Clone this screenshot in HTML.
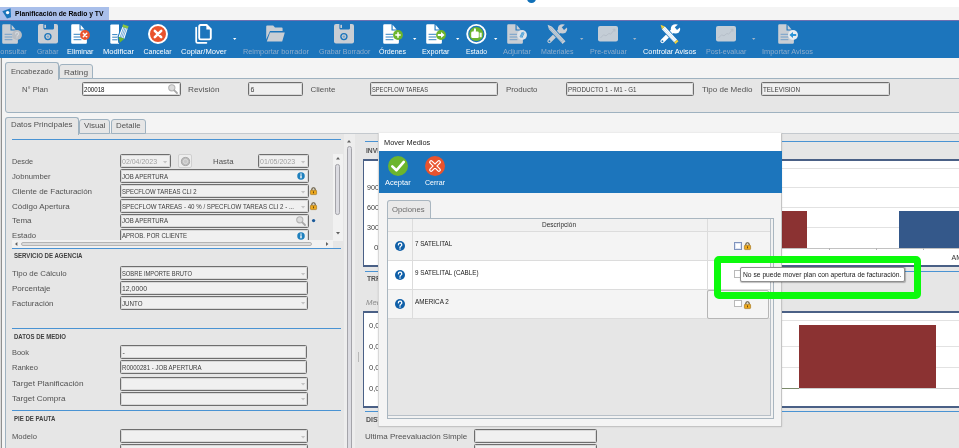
<!DOCTYPE html>
<html><head><meta charset="utf-8"><title>Planificaci&oacute;n de Radio y TV</title>
<style>
html,body{margin:0;padding:0;}
body{width:959px;height:448px;overflow:hidden;background:#fff;font-family:"Liberation Sans", sans-serif;position:relative;}
.a{position:absolute;box-sizing:border-box;}
.t{position:absolute;white-space:nowrap;transform-origin:0 50%;line-height:1;}
svg{position:absolute;overflow:visible;}
#w{position:absolute;left:0;top:0;width:959px;height:448px;overflow:hidden;will-change:transform;}
</style></head><body><div id="w">
<div class="a" style="left:0px;top:7px;width:959px;height:13px;background:#f4f4f4;"></div>
<div class="a" style="left:0px;top:7px;width:108.5px;height:13px;background:#a9bfea;"></div>
<svg style="left:2px;top:8px" width="10" height="11" viewBox="0 0 10 11"><path d="M0.3 3.2 L8.6 0.2 L9 9.2 L5 10.5 Z" fill="#1a74bb"/><circle cx="5.6" cy="4.6" r="1.7" fill="#fff"/></svg>
<span class="t" style="left:14.5px;top:10px;font-size:8px;color:#000;font-weight:bold;transform:scaleX(0.847);">Planificaci&oacute;n de Radio y TV</span>
<div class="a" style="left:527px;top:-6px;width:9px;height:9px;background:#1070b8;border-radius:50%;"></div>
<div class="a" style="left:0px;top:20px;width:959px;height:38px;background:#1c75bc;"></div>
<div class="a" style="left:0px;top:20px;width:959px;height:0.6px;background:#6f6fb0;"></div>
<div class="a" style="left:0px;top:58px;width:959px;height:390px;background:#f4f4f4;"></div>
<div class="a" style="left:0px;top:58px;width:1.4px;height:390px;background:#dcdcdc;"></div>
<div class="a" style="left:1.3px;top:58px;width:0.9px;height:390px;background:#909090;"></div>
<div class="a" style="left:5px;top:78px;width:960px;height:35px;background:#e6e6e6;border:1px solid #9fb2c0;border-radius:0 0 0 3px;"></div>
<div class="a" style="left:59px;top:64px;width:34px;height:15px;background:#e6e6e6;border:1px solid #9fb2c0;border-radius:3px 3px 0 0;"></div>
<div class="a" style="left:5px;top:62px;width:54px;height:18px;background:#e6e6e6;border:1px solid #9fb2c0;border-radius:3px 3px 0 0;border-bottom:none;"></div>
<span class="t" style="left:11px;top:68px;font-size:8px;color:#525252;transform:scaleX(0.944);">Encabezado</span>
<span class="t" style="left:64px;top:69px;font-size:8px;color:#525252;transform:scaleX(1.038);">Rating</span>
<span class="t" style="left:22px;top:86px;font-size:8px;color:#525252;transform:scaleX(0.955);">N&deg; Plan</span>
<div class="a" style="left:82px;top:82px;width:99px;height:14px;background:#fff;border:1px solid #6e6e6e;border-radius:1.5px;box-shadow:inset 0 0 0 1px #d8d8d8;"></div>
<span class="t" style="left:84px;top:86px;font-size:7px;color:#101010;transform:scaleX(0.878);">200018</span>
<svg style="left:168.2px;top:84.4px" width="10" height="10" viewBox="0 0 10 10"><circle cx="3.8" cy="3.8" r="3.1" fill="#dcdcdc" stroke="#b4b4b4" stroke-width="1.1"/><path d="M6.3 6.3 L9 9" stroke="#a8a8a8" stroke-width="1.8" stroke-linecap="round"/></svg>
<span class="t" style="left:188px;top:86px;font-size:8px;color:#525252;transform:scaleX(1.026);">Revisi&oacute;n</span>
<div class="a" style="left:248px;top:82px;width:55px;height:14px;background:#f0f0f0;border:1px solid #6e6e6e;border-radius:1.5px;box-shadow:inset 0 0 0 1px #d8d8d8;"></div>
<span class="t" style="left:250.5px;top:86px;font-size:7px;color:#3c3c3c;">6</span>
<span class="t" style="left:310.5px;top:86px;font-size:8px;color:#525252;">Cliente</span>
<div class="a" style="left:370px;top:82px;width:128px;height:14px;background:#f0f0f0;border:1px solid #6e6e6e;border-radius:1.5px;box-shadow:inset 0 0 0 1px #d8d8d8;"></div>
<span class="t" style="left:372px;top:86px;font-size:7px;color:#3c3c3c;transform:scaleX(0.816);">SPECFLOW TAREAS</span>
<span class="t" style="left:506px;top:86px;font-size:8px;color:#525252;transform:scaleX(0.983);">Producto</span>
<div class="a" style="left:565.5px;top:82px;width:128.5px;height:14px;background:#f0f0f0;border:1px solid #6e6e6e;border-radius:1.5px;box-shadow:inset 0 0 0 1px #d8d8d8;"></div>
<span class="t" style="left:567.5px;top:86px;font-size:7px;color:#3c3c3c;transform:scaleX(0.886);">PRODUCTO 1 - M1 - G1</span>
<span class="t" style="left:702px;top:86px;font-size:8px;color:#525252;">Tipo de Medio</span>
<div class="a" style="left:761px;top:82px;width:129px;height:14px;background:#f0f0f0;border:1px solid #6e6e6e;border-radius:1.5px;box-shadow:inset 0 0 0 1px #d8d8d8;"></div>
<span class="t" style="left:763px;top:86px;font-size:7px;color:#3c3c3c;transform:scaleX(0.897);">TELEVISION</span>
<div class="a" style="left:5px;top:133px;width:960px;height:320px;background:#e6e6e6;border:1px solid #c4c9ce;border-radius:0 0 0 3px;border-left-color:#9fb2c0;"></div>
<div class="a" style="left:79px;top:118.5px;width:31px;height:15.5px;background:#e6e6e6;border:1px solid #9fb2c0;border-radius:3px 3px 0 0;"></div>
<div class="a" style="left:111px;top:118.5px;width:35px;height:15.5px;background:#e6e6e6;border:1px solid #9fb2c0;border-radius:3px 3px 0 0;"></div>
<div class="a" style="left:5px;top:117px;width:74px;height:18px;background:#e6e6e6;border:1px solid #9fb2c0;border-radius:3px 3px 0 0;border-bottom:none;"></div>
<span class="t" style="left:11px;top:121px;font-size:8px;color:#525252;transform:scaleX(0.988);">Datos Principales</span>
<span class="t" style="left:83.5px;top:122px;font-size:8px;color:#525252;transform:scaleX(0.993);">Visual</span>
<span class="t" style="left:115.5px;top:122px;font-size:8px;color:#525252;transform:scaleX(0.984);">Detalle</span>
<div class="a" style="left:344px;top:134px;width:10.5px;height:320px;background:#ededed;"></div>
<svg style="left:347.3px;top:140.3px" width="4" height="2.4" viewBox="0 0 4 2.4"><path d="M0 2.4 L2 0 L4 2.4 Z" fill="#606060"/></svg>
<div class="a" style="left:346.8px;top:146px;width:5.2px;height:310px;background:#dcdce2;border:1px solid #a4a4aa;border-radius:2.6px;"></div>
<div class="a" style="left:357.5px;top:352px;width:1px;height:10px;background:#b8b8b8;"></div>
<div class="a" style="left:12px;top:138.5px;width:329px;height:1px;background:#4a93d3;"></div>
<span class="t" style="left:12px;top:158px;font-size:8px;color:#525252;transform:scaleX(0.908);">Desde</span>
<div class="a" style="left:120px;top:154px;width:51px;height:14px;background:#f0f0f0;border:1px solid #6e6e6e;border-radius:1.5px;box-shadow:inset 0 0 0 1px #d8d8d8;"></div>
<span class="t" style="left:122px;top:158px;font-size:7px;color:#a0a0a0;">02/04/2023</span>
<svg style="left:162.9px;top:160.7px" width="4.2" height="2.5" viewBox="0 0 4.2 2.5"><path d="M0 0 L4.2 0 L2.1 2.5 Z" fill="#c4c4c4"/></svg>
<div class="a" style="left:178px;top:154px;width:14px;height:14px;background:#ededed;border:1px solid #d0d0d0;border-radius:2px;"></div>
<svg style="left:180.5px;top:156.5px" width="9" height="9" viewBox="0 0 9 9"><circle cx="4.5" cy="4.5" r="4.1" fill="#bcbcbc" stroke="#9c9c9c" stroke-width="0.8"/><circle cx="4.5" cy="4.5" r="2.2" fill="#c8c8c8" stroke="#dedede" stroke-width="0.8"/></svg>
<span class="t" style="left:213px;top:158px;font-size:8px;color:#525252;transform:scaleX(0.981);">Hasta</span>
<div class="a" style="left:258px;top:154px;width:50.5px;height:14px;background:#f0f0f0;border:1px solid #6e6e6e;border-radius:1.5px;box-shadow:inset 0 0 0 1px #d8d8d8;"></div>
<span class="t" style="left:260px;top:158px;font-size:7px;color:#a0a0a0;">01/05/2023</span>
<svg style="left:300.9px;top:160.7px" width="4.2" height="2.5" viewBox="0 0 4.2 2.5"><path d="M0 0 L4.2 0 L2.1 2.5 Z" fill="#c4c4c4"/></svg>
<span class="t" style="left:12px;top:173px;font-size:8px;color:#525252;transform:scaleX(0.962);">Jobnumber</span>
<div class="a" style="left:120px;top:169px;width:188.5px;height:14px;background:#f0f0f0;border:1px solid #6e6e6e;border-radius:1.5px;box-shadow:inset 0 0 0 1px #d8d8d8;"></div>
<span class="t" style="left:122px;top:173px;font-size:7px;color:#3c3c3c;transform:scaleX(0.865);">JOB APERTURA</span>
<svg style="left:296.7px;top:172.3px" width="8" height="8" viewBox="0 0 8 8"><circle cx="4" cy="4" r="3.75" fill="#1f80bd"/><rect x="3.3" y="3.3" width="1.4" height="3" fill="#fff"/><rect x="3.3" y="1.5" width="1.4" height="1.2" fill="#fff"/></svg>
<span class="t" style="left:12px;top:188px;font-size:8px;color:#525252;">Cliente de Facturaci&oacute;n</span>
<div class="a" style="left:120px;top:184px;width:188.5px;height:14px;background:#f0f0f0;border:1px solid #6e6e6e;border-radius:1.5px;box-shadow:inset 0 0 0 1px #d8d8d8;"></div>
<span class="t" style="left:122px;top:188px;font-size:7px;color:#3c3c3c;transform:scaleX(0.854);">SPECFLOW TAREAS CLI 2</span>
<svg style="left:300.9px;top:190.7px" width="4.2" height="2.5" viewBox="0 0 4.2 2.5"><path d="M0 0 L4.2 0 L2.1 2.5 Z" fill="#c4c4c4"/></svg>
<svg style="left:310.2px;top:186.2px" width="7" height="9" viewBox="0 0 7 9"><path d="M1.8 4.6 V3.4 A1.7 1.7 0 0 1 5.2 3.4 V4.6" fill="none" stroke="#5e5236" stroke-width="1.1"/><rect x="0.4" y="4.2" width="6.2" height="4.4" rx="0.8" fill="#eda81c" stroke="#9a6c14" stroke-width="0.6"/><rect x="3" y="5.4" width="1" height="1.9" fill="#6a4808"/></svg>
<span class="t" style="left:12px;top:203px;font-size:8px;color:#525252;">C&oacute;digo Apertura</span>
<div class="a" style="left:120px;top:199px;width:188.5px;height:14px;background:#f0f0f0;border:1px solid #6e6e6e;border-radius:1.5px;box-shadow:inset 0 0 0 1px #d8d8d8;"></div>
<span class="t" style="left:122px;top:203px;font-size:7px;color:#3c3c3c;transform:scaleX(0.878);">SPECFLOW TAREAS - 40 % / SPECFLOW TAREAS CLI 2 - ...</span>
<svg style="left:300.9px;top:205.7px" width="4.2" height="2.5" viewBox="0 0 4.2 2.5"><path d="M0 0 L4.2 0 L2.1 2.5 Z" fill="#c4c4c4"/></svg>
<svg style="left:310.2px;top:201.2px" width="7" height="9" viewBox="0 0 7 9"><path d="M1.8 4.6 V3.4 A1.7 1.7 0 0 1 5.2 3.4 V4.6" fill="none" stroke="#5e5236" stroke-width="1.1"/><rect x="0.4" y="4.2" width="6.2" height="4.4" rx="0.8" fill="#eda81c" stroke="#9a6c14" stroke-width="0.6"/><rect x="3" y="5.4" width="1" height="1.9" fill="#6a4808"/></svg>
<span class="t" style="left:12px;top:217px;font-size:8px;color:#525252;">Tema</span>
<div class="a" style="left:120px;top:214px;width:188.5px;height:14px;background:#f0f0f0;border:1px solid #6e6e6e;border-radius:1.5px;box-shadow:inset 0 0 0 1px #d8d8d8;"></div>
<span class="t" style="left:122px;top:217px;font-size:7px;color:#3c3c3c;transform:scaleX(0.865);">JOB APERTURA</span>
<svg style="left:296.4px;top:215.8px" width="10" height="10" viewBox="0 0 10 10"><circle cx="3.8" cy="3.8" r="3.1" fill="#dcdcdc" stroke="#b4b4b4" stroke-width="1.1"/><path d="M6.3 6.3 L9 9" stroke="#a8a8a8" stroke-width="1.8" stroke-linecap="round"/></svg>
<svg style="left:311px;top:217.6px" width="5" height="5" viewBox="0 0 5 5"><circle cx="2.6" cy="2.6" r="1.65" fill="#1a5a9a"/></svg>
<span class="t" style="left:12px;top:232px;font-size:8px;color:#525252;transform:scaleX(0.964);">Estado</span>
<div class="a" style="left:120px;top:229px;width:188.5px;height:14px;background:#f0f0f0;border:1px solid #6e6e6e;border-radius:1.5px;box-shadow:inset 0 0 0 1px #d8d8d8;"></div>
<span class="t" style="left:122px;top:232px;font-size:7px;color:#3c3c3c;transform:scaleX(0.866);">APROB. POR CLIENTE</span>
<svg style="left:296.7px;top:231.5px" width="8" height="8" viewBox="0 0 8 8"><circle cx="4" cy="4" r="3.75" fill="#1f80bd"/><rect x="3.3" y="3.3" width="1.4" height="3" fill="#fff"/><rect x="3.3" y="1.5" width="1.4" height="1.2" fill="#fff"/></svg>
<div class="a" style="left:332.5px;top:153.5px;width:10px;height:87px;background:#f1f1f1;"></div>
<svg style="left:335.5px;top:157.3px" width="4" height="2.4" viewBox="0 0 4 2.4"><path d="M0 2.4 L2 0 L4 2.4 Z" fill="#606060"/></svg>
<svg style="left:335.5px;top:232.3px" width="4" height="2.4" viewBox="0 0 4 2.4"><path d="M0 0 L4 0 L2 2.4 Z" fill="#606060"/></svg>
<div class="a" style="left:335.3px;top:163.5px;width:4.6px;height:51px;background:#dcdce2;border:1px solid #a4a4aa;border-radius:2.3px;"></div>
<div class="a" style="left:12px;top:240px;width:320.5px;height:7.5px;background:#f1f1f1;"></div>
<svg style="left:15.2px;top:242px" width="2.4" height="4" viewBox="0 0 2.4 4"><path d="M2.4 0 L0 2 L2.4 4 Z" fill="#606060"/></svg>
<svg style="left:326.2px;top:242px" width="2.4" height="4" viewBox="0 0 2.4 4"><path d="M0 0 L2.4 2 L0 4 Z" fill="#606060"/></svg>
<div class="a" style="left:21px;top:241.5px;width:290.5px;height:4.5px;background:#dcdcdc;border:1px solid #b4b4b4;border-radius:2.3px;"></div>
<div class="a" style="left:12px;top:247.8px;width:329px;height:1px;background:#4a93d3;"></div>
<span class="t" style="left:14px;top:252px;font-size:7px;color:#404040;font-weight:bold;transform:scaleX(0.867);">SERVICIO DE AGENCIA</span>
<span class="t" style="left:12px;top:270px;font-size:8px;color:#525252;transform:scaleX(0.986);">Tipo de C&aacute;lculo</span>
<div class="a" style="left:120px;top:266px;width:188px;height:14px;background:#f0f0f0;border:1px solid #6e6e6e;border-radius:1.5px;box-shadow:inset 0 0 0 1px #d8d8d8;"></div>
<span class="t" style="left:122px;top:270px;font-size:7px;color:#3c3c3c;transform:scaleX(0.828);">SOBRE IMPORTE BRUTO</span>
<svg style="left:300.9px;top:273.2px" width="4.2" height="2.5" viewBox="0 0 4.2 2.5"><path d="M0 0 L4.2 0 L2.1 2.5 Z" fill="#c4c4c4"/></svg>
<span class="t" style="left:12px;top:285px;font-size:8px;color:#525252;transform:scaleX(1.007);">Porcentaje</span>
<div class="a" style="left:120px;top:281px;width:188px;height:14px;background:#f0f0f0;border:1px solid #6e6e6e;border-radius:1.5px;box-shadow:inset 0 0 0 1px #d8d8d8;"></div>
<span class="t" style="left:122px;top:285px;font-size:7px;color:#3c3c3c;transform:scaleX(0.988);">12,0000</span>
<span class="t" style="left:12px;top:300px;font-size:8px;color:#525252;transform:scaleX(0.993);">Facturaci&oacute;n</span>
<div class="a" style="left:120px;top:296px;width:188px;height:14px;background:#f0f0f0;border:1px solid #6e6e6e;border-radius:1.5px;box-shadow:inset 0 0 0 1px #d8d8d8;"></div>
<span class="t" style="left:122px;top:300px;font-size:7px;color:#3c3c3c;transform:scaleX(0.883);">JUNTO</span>
<svg style="left:300.9px;top:302.2px" width="4.2" height="2.5" viewBox="0 0 4.2 2.5"><path d="M0 0 L4.2 0 L2.1 2.5 Z" fill="#c4c4c4"/></svg>
<div class="a" style="left:12px;top:327.6px;width:329px;height:1px;background:#4a93d3;"></div>
<span class="t" style="left:14px;top:333px;font-size:7px;color:#404040;font-weight:bold;transform:scaleX(0.861);">DATOS DE MEDIO</span>
<span class="t" style="left:12px;top:349px;font-size:8px;color:#525252;transform:scaleX(0.932);">Book</span>
<div class="a" style="left:120px;top:345px;width:186.5px;height:14px;background:#f0f0f0;border:1px solid #6e6e6e;border-radius:1.5px;box-shadow:inset 0 0 0 1px #d8d8d8;"></div>
<span class="t" style="left:122.5px;top:349px;font-size:7px;color:#3c3c3c;">-</span>
<span class="t" style="left:12px;top:364px;font-size:8px;color:#525252;transform:scaleX(0.943);">Rankeo</span>
<div class="a" style="left:120px;top:360px;width:186.5px;height:14px;background:#f0f0f0;border:1px solid #6e6e6e;border-radius:1.5px;box-shadow:inset 0 0 0 1px #d8d8d8;"></div>
<span class="t" style="left:122px;top:364px;font-size:7px;color:#3c3c3c;transform:scaleX(0.867);">R0000281 - JOB APERTURA</span>
<span class="t" style="left:12px;top:380px;font-size:8px;color:#525252;transform:scaleX(1.031);">Target Planificaci&oacute;n</span>
<div class="a" style="left:120px;top:377px;width:188px;height:14px;background:#f0f0f0;border:1px solid #6e6e6e;border-radius:1.5px;box-shadow:inset 0 0 0 1px #d8d8d8;"></div>
<svg style="left:300.9px;top:383.2px" width="4.2" height="2.5" viewBox="0 0 4.2 2.5"><path d="M0 0 L4.2 0 L2.1 2.5 Z" fill="#c4c4c4"/></svg>
<span class="t" style="left:12px;top:395px;font-size:8px;color:#525252;transform:scaleX(1.011);">Target Compra</span>
<div class="a" style="left:120px;top:392px;width:188px;height:14px;background:#f0f0f0;border:1px solid #6e6e6e;border-radius:1.5px;box-shadow:inset 0 0 0 1px #d8d8d8;"></div>
<svg style="left:300.9px;top:398.2px" width="4.2" height="2.5" viewBox="0 0 4.2 2.5"><path d="M0 0 L4.2 0 L2.1 2.5 Z" fill="#c4c4c4"/></svg>
<div class="a" style="left:12px;top:409.8px;width:329px;height:1px;background:#4a93d3;"></div>
<span class="t" style="left:14px;top:415px;font-size:7px;color:#404040;font-weight:bold;transform:scaleX(0.865);">PIE DE PAUTA</span>
<span class="t" style="left:12px;top:433px;font-size:8px;color:#525252;transform:scaleX(0.952);">Modelo</span>
<div class="a" style="left:120px;top:429px;width:188px;height:14px;background:#f0f0f0;border:1px solid #6e6e6e;border-radius:1.5px;box-shadow:inset 0 0 0 1px #d8d8d8;"></div>
<svg style="left:300.9px;top:436.2px" width="4.2" height="2.5" viewBox="0 0 4.2 2.5"><path d="M0 0 L4.2 0 L2.1 2.5 Z" fill="#c4c4c4"/></svg>
<div class="a" style="left:120px;top:444px;width:188px;height:14px;background:#f0f0f0;border:1px solid #6e6e6e;border-radius:1.5px;box-shadow:inset 0 0 0 1px #d8d8d8;"></div>
<div class="a" style="left:365px;top:141.4px;width:600px;height:1px;background:#4a93d3;"></div>
<span class="t" style="left:366px;top:147px;font-size:7px;color:#505050;font-weight:bold;transform:scaleX(0.961);">INVERSI&Oacute;N</span>
<div class="a" style="left:363px;top:159.2px;width:600px;height:107.4px;background:#fff;border:1px solid #4a6086;border-width:2px 0 2px 1.7px;"></div>
<div class="a" style="left:382px;top:167.5px;width:577px;height:0.8px;background:#e2e2e2;"></div>
<div class="a" style="left:382px;top:187.3px;width:577px;height:0.8px;background:#e2e2e2;"></div>
<div class="a" style="left:382px;top:207px;width:577px;height:0.8px;background:#e2e2e2;"></div>
<div class="a" style="left:382px;top:227.3px;width:577px;height:0.8px;background:#e2e2e2;"></div>
<span class="t" style="left:366.5px;top:184px;font-size:7px;color:#404040;transform:scaleX(1.027);">900</span>
<span class="t" style="left:366.5px;top:204px;font-size:7px;color:#404040;transform:scaleX(1.027);">600</span>
<span class="t" style="left:366.5px;top:224px;font-size:7px;color:#404040;transform:scaleX(1.027);">300</span>
<span class="t" style="left:374px;top:244px;font-size:7px;color:#404040;transform:scaleX(1.152);">0</span>
<div class="a" style="left:782px;top:211.3px;width:25.3px;height:36.5px;background:#8b3232;"></div>
<div class="a" style="left:899px;top:211.3px;width:60px;height:36.5px;background:#34588a;"></div>
<div class="a" style="left:782px;top:247.8px;width:177px;height:0.9px;background:#c2c2c2;"></div>
<div class="a" style="left:829px;top:248px;width:0.8px;height:2px;background:#b4b4b4;"></div>
<div class="a" style="left:876px;top:248px;width:0.8px;height:2px;background:#b4b4b4;"></div>
<div class="a" style="left:923px;top:248px;width:0.8px;height:2px;background:#b4b4b4;"></div>
<span class="t" style="left:951.5px;top:254px;font-size:7px;color:#303030;">AM</span>
<div class="a" style="left:365px;top:270.8px;width:600px;height:1px;background:#4a93d3;"></div>
<span class="t" style="left:367px;top:275px;font-size:7px;color:#505050;font-weight:bold;transform:scaleX(0.964);">TRP</span>
<span class="t" style="left:366px;top:299px;font-size:8px;color:#8a8a8a;font-style:italic;transform:scaleX(0.963);">Medio</span>
<div class="a" style="left:363px;top:311px;width:600px;height:97px;background:#fff;border:1px solid #4a6086;border-width:2px 0 2px 1.7px;"></div>
<div class="a" style="left:382px;top:319.8px;width:577px;height:0.8px;background:#e2e2e2;"></div>
<div class="a" style="left:382px;top:346.3px;width:577px;height:0.8px;background:#e2e2e2;"></div>
<div class="a" style="left:382px;top:367.2px;width:577px;height:0.8px;background:#e2e2e2;"></div>
<div class="a" style="left:782px;top:388.3px;width:177px;height:0.9px;background:#cfcfcf;"></div>
<div class="a" style="left:782px;top:388.3px;width:17px;height:0.9px;background:#7a8a6a;"></div>
<div class="a" style="left:799px;top:325.3px;width:136.7px;height:63.2px;background:#8b3232;"></div>
<span class="t" style="left:368.5px;top:322px;font-size:7px;color:#404040;transform:scaleX(1.079);">0,0</span>
<span class="t" style="left:368.5px;top:343px;font-size:7px;color:#404040;transform:scaleX(1.079);">0,0</span>
<span class="t" style="left:368.5px;top:364px;font-size:7px;color:#404040;transform:scaleX(1.079);">0,0</span>
<span class="t" style="left:368.5px;top:385px;font-size:7px;color:#404040;transform:scaleX(1.079);">0,0</span>
<div class="a" style="left:365px;top:411px;width:600px;height:1px;background:#4a93d3;"></div>
<span class="t" style="left:366px;top:416px;font-size:7px;color:#505050;font-weight:bold;transform:scaleX(0.989);">DISTRIBUCI&Oacute;N</span>
<span class="t" style="left:365px;top:433px;font-size:8px;color:#525252;">Ultima Preevaluaci&oacute;n Simple</span>
<div class="a" style="left:474px;top:429px;width:123px;height:14px;background:#f0f0f0;border:1px solid #6e6e6e;border-radius:1.5px;box-shadow:inset 0 0 0 1px #d8d8d8;"></div>
<div class="a" style="left:474px;top:444px;width:123px;height:14px;background:#f0f0f0;border:1px solid #6e6e6e;border-radius:1.5px;box-shadow:inset 0 0 0 1px #d8d8d8;"></div>
<svg style="left:2px;top:24px" width="17" height="20" viewBox="0 0 17 20"><path d="M1.4 0.2 H8.5 V6.5 H13.6 L15.9 8.8 V18.5 Q15.9 19.7 14.7 19.7 H1.4 Q0.2 19.7 0.2 18.5 V1.4 Q0.2 0.2 1.4 0.2 Z" fill="#c9ced4"/><path d="M9.6 0.8 L13.6 5.4 H9.6 Z" fill="#c9ced4"/><path d="M2.6 10.3 H10.4 M2.6 13 H10.4 M2.6 15.7 H10.4" stroke="#6a9bc8" stroke-width="0.9"/></svg>
<svg style="left:11.7px;top:30.200000000000003px" width="10" height="10" viewBox="0 0 10 10"><circle cx="5" cy="5" r="4.95" fill="#b9bec5"/><path d="M3.6 3.9 A1.5 1.5 0 1 1 5.7 5.2 Q5 5.6 5 6.3" fill="none" stroke="#d5d9de" stroke-width="1.1" stroke-linecap="round"/><circle cx="5" cy="7.8" r="0.6" fill="#d5d9de"/></svg>
<span class="t" style="left:-4.6px;top:48px;font-size:7px;color:#8fadcc;transform:scaleX(1.061);">Consultar</span>
<svg style="left:37.5px;top:24px" width="20" height="20" viewBox="0 0 20 20"><path d="M2 0 H18 Q20 0 20 2 V17.5 Q20 19.6 18 19.6 H2 Q0 19.6 0 17.5 V2 Q0 0 2 0 Z" fill="#c9ced4"/><path d="M5.4 0 H16 V4.3 Q16 5.4 15 5.4 H6.4 Q5.4 5.4 5.4 4.3 Z" fill="#1c75bc"/><rect x="6.4" y="0.8" width="1.6" height="3.2" fill="#c9ced4"/><circle cx="9.9" cy="12.6" r="3.7" fill="#1c75bc"/><circle cx="9.9" cy="12.6" r="2.3" fill="#c9ced4"/><circle cx="9.9" cy="12.6" r="1.2" fill="#1c75bc" opacity="0.45"/></svg>
<span class="t" style="left:36.5px;top:48px;font-size:7px;color:#8fadcc;transform:scaleX(0.986);">Grabar</span>
<svg style="left:70.5px;top:24px" width="17" height="20" viewBox="0 0 17 20"><path d="M1.4 0.2 H8.5 V6.5 H13.6 L15.9 8.8 V18.5 Q15.9 19.7 14.7 19.7 H1.4 Q0.2 19.7 0.2 18.5 V1.4 Q0.2 0.2 1.4 0.2 Z" fill="#ffffff"/><path d="M9.6 0.8 L13.6 5.4 H9.6 Z" fill="#ffffff"/><path d="M2.6 10.3 H10.4 M2.6 13 H10.4 M2.6 15.7 H10.4" stroke="#1c75bc" stroke-width="0.9"/></svg>
<svg style="left:80.4px;top:30.1px" width="10" height="10" viewBox="0 0 10 10"><circle cx="5" cy="5" r="4.95" fill="#e9532d"/><path d="M3.3 3.3 L6.7 6.7 M6.7 3.3 L3.3 6.7" stroke="#fff" stroke-width="1.5" stroke-linecap="round"/></svg>
<span class="t" style="left:67px;top:48px;font-size:7px;color:#ffffff;transform:scaleX(1.048);">Eliminar</span>
<svg style="left:109.5px;top:24px" width="19" height="20" viewBox="0 0 19 20"><path d="M1.5 0.4 H9 V19.7 H1.5 Q0.3 19.7 0.3 18.5 V1.6 Q0.3 0.4 1.5 0.4 Z" fill="#fff"/><path d="M2.2 10.6 H7.4 M2.2 13.2 H7.4 M2.2 15.8 H7.4" stroke="#1c75bc" stroke-width="0.9"/><path d="M11.6 1.6 L18.6 4.2 L15.2 15.2 L10 19.6 L8.2 18.8 L7.6 12.6 Z" fill="#1c75bc"/><path d="M12.3 2.9 L17.7 4.5 L14.4 14.8 L8.6 12.8 Z" fill="#fff"/><path d="M13.7 3.4 L10.1 13.3 M15.1 3.8 L11.5 13.8 M16.5 4.2 L12.9 14.3" stroke="#1c75bc" stroke-width="0.6"/><path d="M13 0.3 L18.7 2.2 L17.7 4.5 L12.3 2.9 Z" fill="#8cc63f"/><path d="M8.6 12.8 L14.4 14.8 L10 18.6 Z" fill="#6cb52d"/></svg>
<span class="t" style="left:102.9px;top:48px;font-size:7px;color:#ffffff;transform:scaleX(1.091);">Modificar</span>
<svg style="left:147.6px;top:24px" width="20" height="20" viewBox="0 0 20 20"><circle cx="10" cy="10" r="9" fill="#e9532d" stroke="#fff" stroke-width="2"/><path d="M6.8 6.8 L13.2 13.2 M13.2 6.8 L6.8 13.2" stroke="#fff" stroke-width="2.5" stroke-linecap="round"/></svg>
<span class="t" style="left:143.5px;top:48px;font-size:7px;color:#ffffff;">Cancelar</span>
<svg style="left:195px;top:24px" width="17" height="20" viewBox="0 0 17 20"><path d="M1.2 3.6 V17.4 Q1.2 18.8 2.6 18.8 H11.4" fill="none" stroke="#fff" stroke-width="1.8" stroke-linecap="round"/><path d="M5.6 1 H11.6 L15.8 5.2 V14 Q15.8 15.4 14.4 15.4 H5.6 Q4.2 15.4 4.2 14 V2.4 Q4.2 1 5.6 1 Z" fill="none" stroke="#fff" stroke-width="1.9" stroke-linejoin="round"/><path d="M11.4 1.2 V5.4 H15.6 Z" fill="#fff"/></svg>
<span class="t" style="left:181px;top:48px;font-size:7px;color:#ffffff;transform:scaleX(1.085);">Copiar/Mover</span>
<svg style="left:233.0px;top:38.4px" width="3.4" height="2.1" viewBox="0 0 3.4 2.1"><path d="M0 0 H3.4 L1.7 2.1 Z" fill="#ffffff"/></svg>
<svg style="left:266px;top:25px" width="19" height="17" viewBox="0 0 19 17"><path d="M1.2 0.4 H7.2 L9 2.4 H15.6 Q16.6 2.4 16.6 3.4 V6 H4 L0.2 14.6 V1.4 Q0.2 0.4 1.2 0.4 Z" fill="#c9ced4"/><path d="M4 7.6 H18.8 L16.2 16.6 H0.8 Z" fill="#c9ced4"/></svg>
<span class="t" style="left:242.6px;top:48px;font-size:7px;color:#8fadcc;transform:scaleX(1.046);">Reimportar borrador</span>
<svg style="left:334px;top:24px" width="20" height="20" viewBox="0 0 20 20"><path d="M2 0 H18 Q20 0 20 2 V17.5 Q20 19.6 18 19.6 H2 Q0 19.6 0 17.5 V2 Q0 0 2 0 Z" fill="#c9ced4"/><path d="M5.4 0 H16 V4.3 Q16 5.4 15 5.4 H6.4 Q5.4 5.4 5.4 4.3 Z" fill="#1c75bc"/><rect x="6.4" y="0.8" width="1.6" height="3.2" fill="#c9ced4"/><circle cx="9.9" cy="12.6" r="3.7" fill="#1c75bc"/><circle cx="9.9" cy="12.6" r="2.3" fill="#c9ced4"/><circle cx="9.9" cy="12.6" r="1.2" fill="#1c75bc" opacity="0.45"/></svg>
<span class="t" style="left:318.5px;top:48px;font-size:7px;color:#8fadcc;transform:scaleX(1.005);">Grabar Borrador</span>
<svg style="left:383px;top:24px" width="17" height="20" viewBox="0 0 17 20"><path d="M1.4 0.2 H8.5 V6.5 H13.6 L15.9 8.8 V18.5 Q15.9 19.7 14.7 19.7 H1.4 Q0.2 19.7 0.2 18.5 V1.4 Q0.2 0.2 1.4 0.2 Z" fill="#ffffff"/><path d="M9.6 0.8 L13.6 5.4 H9.6 Z" fill="#ffffff"/><path d="M2.6 10.3 H10.4 M2.6 13 H10.4 M2.6 15.7 H10.4" stroke="#1c75bc" stroke-width="0.9"/></svg>
<svg style="left:392.6px;top:30.1px" width="10" height="10" viewBox="0 0 10 10"><circle cx="5" cy="5" r="4.95" fill="#6cb52d"/><path d="M5 2.3 V7.7 M2.3 5 H7.7" stroke="#fff" stroke-width="1.5"/></svg>
<span class="t" style="left:379px;top:48px;font-size:7px;color:#ffffff;transform:scaleX(1.005);">&Oacute;rdenes</span>
<svg style="left:412.90000000000003px;top:38.4px" width="3.4" height="2.1" viewBox="0 0 3.4 2.1"><path d="M0 0 H3.4 L1.7 2.1 Z" fill="#ffffff"/></svg>
<svg style="left:426px;top:24px" width="17" height="20" viewBox="0 0 17 20"><path d="M1.4 0.2 H8.5 V6.5 H13.6 L15.9 8.8 V18.5 Q15.9 19.7 14.7 19.7 H1.4 Q0.2 19.7 0.2 18.5 V1.4 Q0.2 0.2 1.4 0.2 Z" fill="#ffffff"/><path d="M9.6 0.8 L13.6 5.4 H9.6 Z" fill="#ffffff"/><path d="M2.6 10.3 H10.4 M2.6 13 H10.4 M2.6 15.7 H10.4" stroke="#1c75bc" stroke-width="0.9"/></svg>
<svg style="left:436px;top:30.1px" width="10" height="10" viewBox="0 0 10 10"><circle cx="5" cy="5" r="4.95" fill="#6cb52d"/><path d="M1.8 3.9 H5 V2 L8.6 5 L5 8 V6.1 H1.8 Z" fill="#fff"/></svg>
<span class="t" style="left:422px;top:48px;font-size:7px;color:#ffffff;transform:scaleX(1.035);">Exportar</span>
<svg style="left:455.8px;top:38.4px" width="3.4" height="2.1" viewBox="0 0 3.4 2.1"><path d="M0 0 H3.4 L1.7 2.1 Z" fill="#ffffff"/></svg>
<svg style="left:466.2px;top:24px" width="20" height="20" viewBox="0 0 20 20"><circle cx="10.3" cy="10" r="9.1" fill="none" stroke="#fff" stroke-width="1.9"/><circle cx="10.3" cy="10" r="7.1" fill="#6cb52d"/><path d="M5.2 9 Q5.2 7.6 6.6 7.6 H7.6 L8.2 4.6 Q8.4 4 9.2 4.2 Q10.2 4.6 10 6 L9.8 7.6 H11.6 Q12.8 7.6 12.8 8.8 V13 Q12.8 14.1 11.6 14.1 H6.6 Q5.2 14.1 5.2 12.8 Z" fill="#fff"/><rect x="13.6" y="8.7" width="2.1" height="4.6" fill="#fff" opacity="0.92"/></svg>
<span class="t" style="left:465.6px;top:48px;font-size:7px;color:#ffffff;transform:scaleX(0.959);">Estado</span>
<svg style="left:493.5px;top:38.4px" width="3.4" height="2.1" viewBox="0 0 3.4 2.1"><path d="M0 0 H3.4 L1.7 2.1 Z" fill="#ffffff"/></svg>
<svg style="left:507px;top:24px" width="17" height="20" viewBox="0 0 17 20"><path d="M1.4 0.2 H8.5 V6.5 H13.6 L15.9 8.8 V18.5 Q15.9 19.7 14.7 19.7 H1.4 Q0.2 19.7 0.2 18.5 V1.4 Q0.2 0.2 1.4 0.2 Z" fill="#c9ced4"/><path d="M9.6 0.8 L13.6 5.4 H9.6 Z" fill="#c9ced4"/><path d="M2.6 10.3 H10.4 M2.6 13 H10.4 M2.6 15.7 H10.4" stroke="#6a9bc8" stroke-width="0.9"/></svg>
<svg style="left:517px;top:30.1px" width="10" height="10" viewBox="0 0 10 10"><circle cx="5" cy="5" r="4.95" fill="#dfe4ea"/><path d="M6.3 2.2 L3.9 7.2 M7 3.2 L5 7.6 M5.2 2.4 L3.2 6.6" stroke="#3a9ad6" stroke-width="0.9" stroke-linecap="round"/></svg>
<span class="t" style="left:503px;top:48px;font-size:7px;color:#8fadcc;transform:scaleX(1.074);">Adjuntar</span>
<svg style="left:547px;top:24px" width="20" height="20" viewBox="0 0 20 20"><path d="M2.4 17.15 L12.5 7.05" stroke="#c9ced4" stroke-width="4.1" stroke-linecap="round"/><circle cx="15.5" cy="4.9" r="4.7" fill="#c9ced4"/><path d="M15.9 4.6 L21.5 -0.2" stroke="#1c75bc" stroke-width="3.5"/><circle cx="2.4" cy="17.2" r="0.95" fill="#1c75bc"/><path d="M2.6 2.9 L16.4 17.9" stroke="#1c75bc" stroke-width="5.3"/><path d="M4.85 2.43 L17.07 15.64 L14.13 18.36 L1.91 5.15 Z" fill="#c9ced4"/><path d="M4.2 4 L15.9 16.7 M3 5.1 L14.8 17.8" stroke="#1c75bc" stroke-width="0.55" stroke-dasharray="0.7 0.7" opacity="0.75"/><path d="M0.6 0.8 L4.85 2.43 L1.91 5.15 Z" fill="#c9ced4"/><path d="M17.07 15.64 L18.47 17.19 L15.53 19.91 L14.13 18.36 Z" fill="#c9ced4"/></svg>
<span class="t" style="left:540.7px;top:48px;font-size:7px;color:#8fadcc;transform:scaleX(1.009);">Materiales</span>
<svg style="left:580.3px;top:38.4px" width="3.4" height="2.1" viewBox="0 0 3.4 2.1"><path d="M0 0 H3.4 L1.7 2.1 Z" fill="#9fb4c8"/></svg>
<svg style="left:598px;top:26.3px" width="20" height="16" viewBox="0 0 20 16"><rect x="0" y="0" width="20" height="15.6" rx="2" fill="#c4cdd6"/><path d="M2.4 12 L5.6 8.8 L8 9.8 L11 7.4 L12.6 8.2 L16.6 3.6" fill="none" stroke="#b2bbc5" stroke-width="0.8"/><path d="M14.6 3.4 L17 3.2 L16.8 5.6" fill="none" stroke="#b2bbc5" stroke-width="0.8"/></svg>
<span class="t" style="left:589.6px;top:48px;font-size:7px;color:#8fadcc;transform:scaleX(1.020);">Pre-evaluar</span>
<svg style="left:632.9px;top:38.4px" width="3.4" height="2.1" viewBox="0 0 3.4 2.1"><path d="M0 0 H3.4 L1.7 2.1 Z" fill="#9fb4c8"/></svg>
<svg style="left:659.8px;top:24px" width="20" height="20" viewBox="0 0 20 20"><path d="M2.4 17.15 L12.5 7.05" stroke="#ffffff" stroke-width="4.1" stroke-linecap="round"/><circle cx="15.5" cy="4.9" r="4.7" fill="#ffffff"/><path d="M15.9 4.6 L21.5 -0.2" stroke="#1c75bc" stroke-width="3.5"/><circle cx="2.4" cy="17.2" r="0.95" fill="#1c75bc"/><path d="M2.6 2.9 L16.4 17.9" stroke="#1c75bc" stroke-width="5.3"/><path d="M4.85 2.43 L17.07 15.64 L14.13 18.36 L1.91 5.15 Z" fill="#ffffff"/><path d="M4.2 4 L15.9 16.7 M3 5.1 L14.8 17.8" stroke="#1c75bc" stroke-width="0.55" stroke-dasharray="0.7 0.7" opacity="0.75"/><path d="M0.6 0.8 L4.85 2.43 L1.91 5.15 Z" fill="#f2d13a"/><path d="M17.07 15.64 L18.47 17.19 L15.53 19.91 L14.13 18.36 Z" fill="#f2d13a"/></svg>
<span class="t" style="left:642.7px;top:48px;font-size:7px;color:#ffffff;transform:scaleX(1.048);">Controlar Avisos</span>
<svg style="left:716px;top:26.3px" width="20" height="16" viewBox="0 0 20 16"><rect x="0" y="0" width="20" height="15.6" rx="2" fill="#c4cdd6"/><path d="M2.4 12 L5.6 8.8 L8 9.8 L11 7.4 L12.6 8.2 L16.6 3.6" fill="none" stroke="#b2bbc5" stroke-width="0.8"/><path d="M14.6 3.4 L17 3.2 L16.8 5.6" fill="none" stroke="#b2bbc5" stroke-width="0.8"/></svg>
<span class="t" style="left:705.7px;top:48px;font-size:7px;color:#8fadcc;transform:scaleX(1.026);">Post-evaluar</span>
<svg style="left:752.3px;top:38.4px" width="3.4" height="2.1" viewBox="0 0 3.4 2.1"><path d="M0 0 H3.4 L1.7 2.1 Z" fill="#9fb4c8"/></svg>
<svg style="left:778px;top:24px" width="17" height="20" viewBox="0 0 17 20"><path d="M1.4 0.2 H8.5 V6.5 H13.6 L15.9 8.8 V18.5 Q15.9 19.7 14.7 19.7 H1.4 Q0.2 19.7 0.2 18.5 V1.4 Q0.2 0.2 1.4 0.2 Z" fill="#c9ced4"/><path d="M9.6 0.8 L13.6 5.4 H9.6 Z" fill="#c9ced4"/><path d="M2.6 10.3 H10.4 M2.6 13 H10.4 M2.6 15.7 H10.4" stroke="#6a9bc8" stroke-width="0.9"/></svg>
<svg style="left:788px;top:30.1px" width="10" height="10" viewBox="0 0 10 10"><circle cx="5" cy="5" r="4.95" fill="#e8ecf0"/><path d="M8.2 3.9 H5 V2 L1.4 5 L5 8 V6.1 H8.2 Z" fill="#2a94d8"/></svg>
<span class="t" style="left:762px;top:48px;font-size:7px;color:#8fadcc;transform:scaleX(1.060);">Importar Avisos</span>
<div class="a" style="left:378px;top:132.5px;width:404.4px;height:294.8px;background:#f4f4f4;border:1px solid #c4c4c4;border-left-color:#d8d8d8;border-top-color:#d8d8d8;box-shadow:0 0 2px rgba(0,0,0,0.10);"></div>
<div class="a" style="left:379px;top:133.0px;width:402.4px;height:18.5px;background:#fff;"></div>
<span class="t" style="left:383.7px;top:139px;font-size:8px;color:#202020;transform:scaleX(0.921);">Mover Medios</span>
<div class="a" style="left:378.5px;top:151px;width:403.4px;height:41.5px;background:#1c75bc;"></div>
<svg style="left:388px;top:155.7px" width="20" height="20" viewBox="0 0 20 20"><circle cx="10" cy="10" r="10" fill="#6cb52d"/><path d="M4.3 10.4 L8.4 14.3 L15.8 5.9" fill="none" stroke="#fff" stroke-width="2.6" stroke-linecap="round" stroke-linejoin="round"/></svg>
<span class="t" style="left:385px;top:179px;font-size:7px;color:#fff;transform:scaleX(1.065);">Aceptar</span>
<svg style="left:425px;top:155.7px" width="20" height="20" viewBox="0 0 20 20"><circle cx="10" cy="10" r="10" fill="#e9532d"/><path d="M6.1 6.1 L13.9 13.9 M13.9 6.1 L6.1 13.9" fill="none" stroke="#fff" stroke-width="4" stroke-linecap="round"/><path d="M6.1 6.1 L13.9 13.9 M13.9 6.1 L6.1 13.9" fill="none" stroke="#e9532d" stroke-width="1.5" stroke-linecap="round"/></svg>
<span class="t" style="left:424.5px;top:179px;font-size:7px;color:#fff;transform:scaleX(1.008);">Cerrar</span>
<div class="a" style="left:387px;top:200px;width:43.5px;height:18.5px;background:#e9e9e9;border:1px solid #a9b6c0;border-radius:3px 3px 0 0;border-bottom:none;"></div>
<span class="t" style="left:392px;top:206px;font-size:8px;color:#6a6a6a;transform:scaleX(0.962);">Opciones</span>
<div class="a" style="left:387px;top:217.5px;width:387px;height:201.5px;background:#e6e6e6;border:1px solid #a9b6c0;"></div>
<div class="a" style="left:769.8px;top:218.5px;width:3.2px;height:199.5px;background:#f2f2f2;border-left:1px solid #b8c0c8;"></div>
<div class="a" style="left:388px;top:414.5px;width:382.8px;height:3.6px;background:#f2f2f2;border-top:1px solid #b8c0c8;"></div>
<div class="a" style="left:388px;top:218.5px;width:381.5px;height:12.5px;background:#f1f1f1;"></div>
<div class="a" style="left:388px;top:231px;width:381.5px;height:29px;background:#f4f4f4;"></div>
<div class="a" style="left:388px;top:260px;width:381.5px;height:29px;background:#fff;"></div>
<div class="a" style="left:388px;top:289px;width:381.5px;height:29px;background:#f4f4f4;"></div>
<div class="a" style="left:388px;top:230.8px;width:381.5px;height:0.9px;background:#dcdcdc;"></div>
<div class="a" style="left:388px;top:259.8px;width:381.5px;height:0.9px;background:#dcdcdc;"></div>
<div class="a" style="left:388px;top:288.8px;width:381.5px;height:0.9px;background:#dcdcdc;"></div>
<div class="a" style="left:388px;top:317.8px;width:381.5px;height:0.9px;background:#dcdcdc;"></div>
<div class="a" style="left:412.3px;top:218.5px;width:0.9px;height:100px;background:#dcdcdc;"></div>
<div class="a" style="left:706.6px;top:218.5px;width:0.9px;height:100px;background:#dcdcdc;"></div>
<span class="t" style="left:542px;top:221px;font-size:7px;color:#303030;transform:scaleX(0.930);">Descripci&oacute;n</span>
<svg style="left:395px;top:241.2px" width="10" height="10" viewBox="0 0 10 10"><circle cx="5" cy="5" r="5" fill="#0f5fa8"/><path d="M3.4 3.9 A1.7 1.6 0 1 1 5.9 5.2 Q5 5.7 5 6.4" fill="none" stroke="#fff" stroke-width="1.3" stroke-linecap="round"/><circle cx="5" cy="8.1" r="0.75" fill="#fff"/></svg>
<svg style="left:395px;top:270.2px" width="10" height="10" viewBox="0 0 10 10"><circle cx="5" cy="5" r="5" fill="#0f5fa8"/><path d="M3.4 3.9 A1.7 1.6 0 1 1 5.9 5.2 Q5 5.7 5 6.4" fill="none" stroke="#fff" stroke-width="1.3" stroke-linecap="round"/><circle cx="5" cy="8.1" r="0.75" fill="#fff"/></svg>
<svg style="left:395px;top:299.2px" width="10" height="10" viewBox="0 0 10 10"><circle cx="5" cy="5" r="5" fill="#0f5fa8"/><path d="M3.4 3.9 A1.7 1.6 0 1 1 5.9 5.2 Q5 5.7 5 6.4" fill="none" stroke="#fff" stroke-width="1.3" stroke-linecap="round"/><circle cx="5" cy="8.1" r="0.75" fill="#fff"/></svg>
<span class="t" style="left:414.5px;top:240px;font-size:7px;color:#202020;transform:scaleX(0.891);">7 SATELITAL</span>
<span class="t" style="left:414.5px;top:269px;font-size:7px;color:#202020;transform:scaleX(0.894);">9 SATELITAL (CABLE)</span>
<span class="t" style="left:414.5px;top:298px;font-size:7px;color:#202020;transform:scaleX(0.905);">AMERICA 2</span>
<div class="a" style="left:707px;top:289.5px;width:62px;height:29.5px;border:1px solid #b6b6b6;border-radius:2px;"></div>
<div class="a" style="left:734px;top:242px;width:7.5px;height:7.5px;background:#fff;border:1.2px solid #7f93bd;box-shadow:inset 0 0 0 1px #dfe6f5;"></div>
<svg style="left:744px;top:241px" width="7" height="9" viewBox="0 0 7 9"><path d="M1.8 4.6 V3.4 A1.7 1.7 0 0 1 5.2 3.4 V4.6" fill="none" stroke="#5e5236" stroke-width="1.1"/><rect x="0.4" y="4.2" width="6.2" height="4.4" rx="0.8" fill="#eda81c" stroke="#9a6c14" stroke-width="0.6"/><rect x="3" y="5.4" width="1" height="1.9" fill="#6a4808"/></svg>
<div class="a" style="left:734px;top:270px;width:7.5px;height:7.5px;background:#fff;border:1.2px solid #b9b9b9;"></div>
<div class="a" style="left:734px;top:299.5px;width:7.5px;height:7.5px;background:#fff;border:1.2px solid #b9b9b9;"></div>
<svg style="left:744px;top:299.5px" width="7" height="9" viewBox="0 0 7 9"><path d="M1.8 4.6 V3.4 A1.7 1.7 0 0 1 5.2 3.4 V4.6" fill="none" stroke="#5e5236" stroke-width="1.1"/><rect x="0.4" y="4.2" width="6.2" height="4.4" rx="0.8" fill="#eda81c" stroke="#9a6c14" stroke-width="0.6"/><rect x="3" y="5.4" width="1" height="1.9" fill="#6a4808"/></svg>
<div class="a" style="left:714px;top:256px;width:207px;height:43.4px;border:7px solid #0bfa0b;border-radius:5px;"></div>
<div class="a" style="left:740px;top:267.4px;width:165.4px;height:14.4px;background:#fff;border:1px solid #8f8f8f;border-radius:2px;box-shadow:0.5px 0.5px 1px rgba(0,0,0,0.25);"></div>
<span class="t" style="left:743px;top:271px;font-size:7px;color:#202020;transform:scaleX(0.958);">No se puede mover plan con apertura de facturaci&oacute;n.</span>
</div></body></html>
